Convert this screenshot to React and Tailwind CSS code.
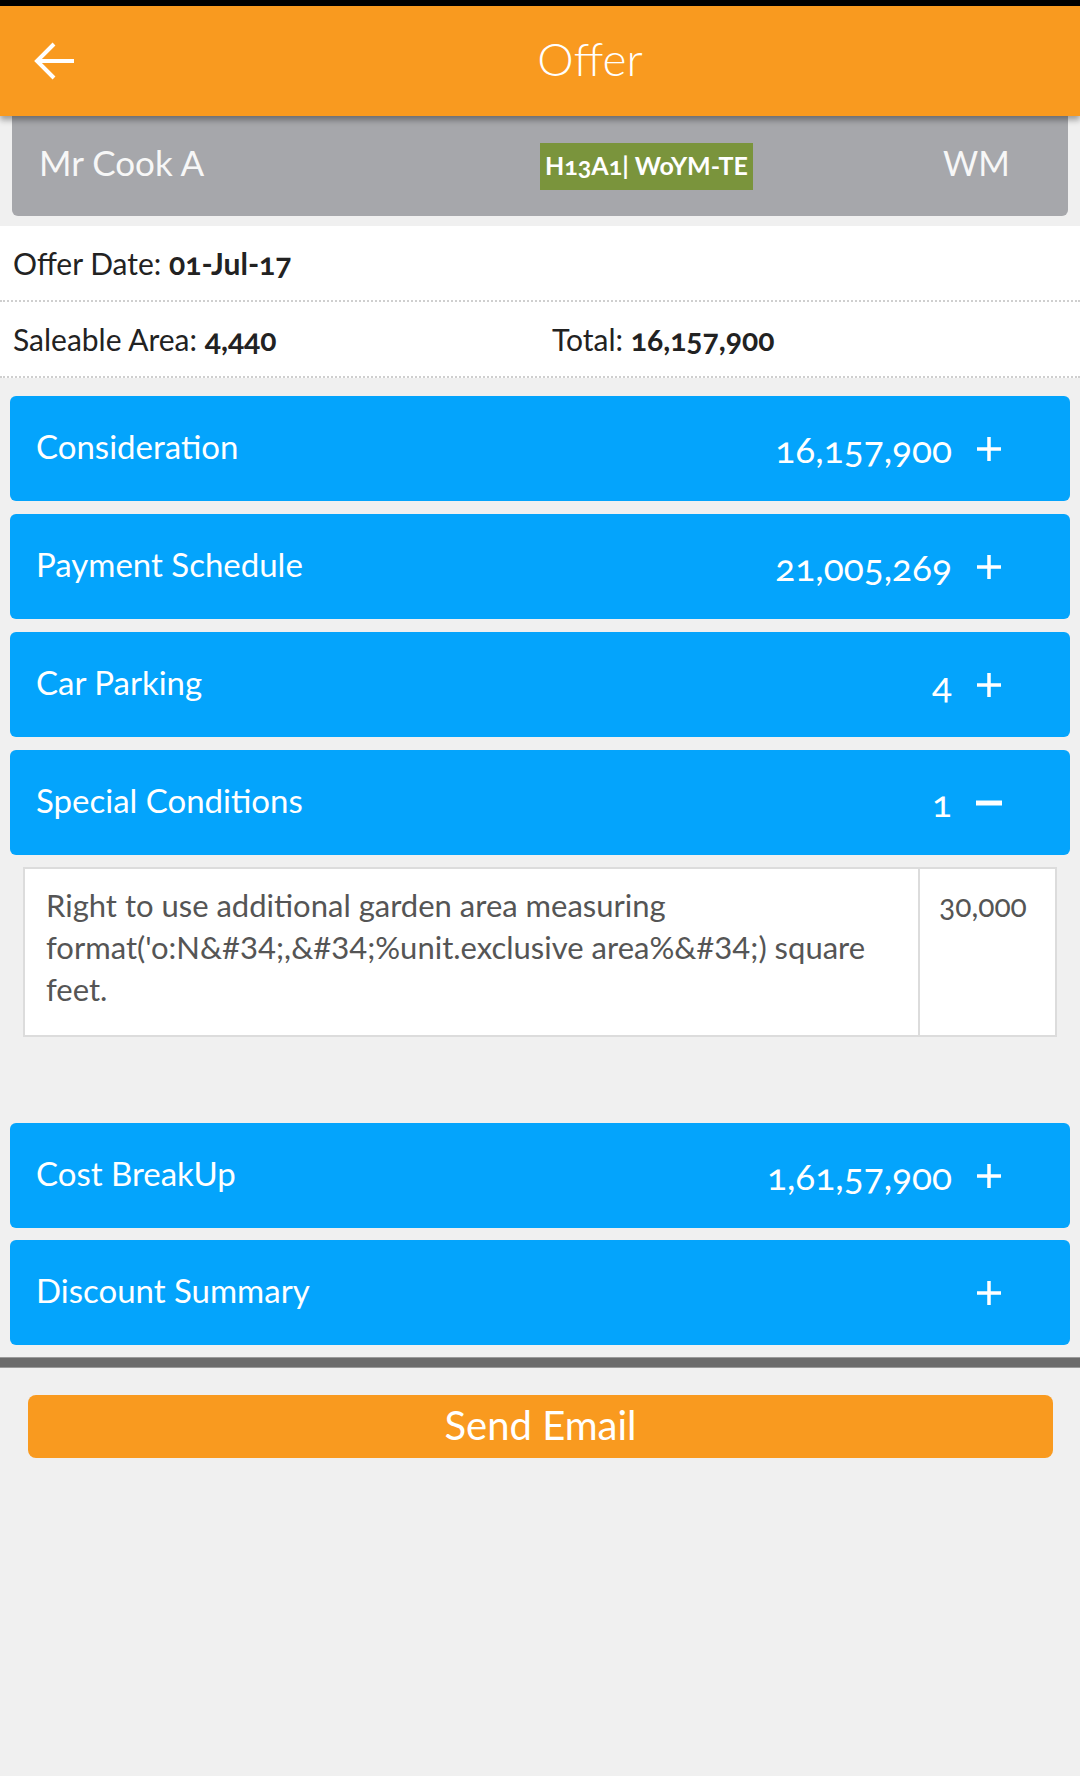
import React from "react";

const sections = [
    { title: "Consideration", value: "16,157,900", open: false },
    { title: "Payment Schedule", value: "21,005,269", open: false },
    { title: "Car Parking", value: "4", open: false },
    { title: "Special Conditions", value: "1", open: true },
];

const sectionsBottom = [
    { title: "Cost BreakUp", value: "1,61,57,900", open: false },
    { title: "Discount Summary", value: "", open: false },
];

const Plus = () => (
    <svg width="26" height="26" viewBox="0 0 26 26">
        <path d="M13 1v24M1 13h24" stroke="#fff" strokeWidth="3.5" />
    </svg>
);

const Minus = () => (
    <svg width="26" height="26" viewBox="0 0 26 26">
        <path d="M0 13h26" stroke="#fff" strokeWidth="5" />
    </svg>
);

const Section = ({ title, value, open }) => (
    <div className="h-[105px] bg-[#04a4fc] rounded-[6px] flex items-center text-white">
        <span className="pl-[26px] text-[33px] flex-1 pb-[3px]">{title}</span>
        <span className="text-[37px] mr-[24px] [font-variant-numeric:oldstyle-nums]">{value}</span>
        <span className="mr-[68px] flex items-center">{open ? <Minus /> : <Plus />}</span>
    </div>
);

const App = () => {
    return (
        <div className="min-h-[1776px] bg-[#f0f0f0] font-['Lato','Open_Sans',sans-serif]">
            <div className="h-[6px] bg-black" />
            <div className="relative z-10 h-[110px] bg-[#f99a1f] flex items-center shadow-[0_4px_6px_rgba(0,0,0,0.35)]">
                <div className="w-[100px] pl-[33px] flex items-center">
                    <svg width="42" height="40" viewBox="0 0 42 40">
                        <path d="M41 20H4M21 3L4 20l17 17" fill="none" stroke="#fff" strokeWidth="4" />
                    </svg>
                </div>
                <div className="flex-1 text-center text-white text-[46px] font-light pb-[6px]">Offer</div>
            </div>
            <div className="mx-[12px] h-[100px] bg-[#a6a7ab] rounded-b-[6px] flex items-center text-[#f7f7f7]">
                <span className="pl-[27px] text-[35px] w-[528px] pb-[8px]">Mr Cook A</span>
                <span className="h-[47px] w-[213px] bg-[#7a943c] text-white text-[25px] font-bold whitespace-nowrap flex items-center justify-center [font-variant-numeric:oldstyle-nums]">
                    H13A1| WoYM-TE
                </span>
                <span className="ml-[190px] text-[34px] pb-[8px]">WM</span>
            </div>
            <div className="mt-[10px] bg-white">
                <div className="h-[76px] flex items-center pl-[13px] text-[30px] text-[#222] border-b-2 border-dotted border-[#cfcfcf]">
                    Offer Date:&nbsp;<b className="[font-variant-numeric:oldstyle-nums]">01-Jul-17</b>
                </div>
                <div className="h-[76px] flex items-center pl-[13px] text-[30px] text-[#222] border-b-2 border-dotted border-[#cfcfcf]">
                    <span className="w-[539px]">
                        Saleable Area: <b className="[font-variant-numeric:oldstyle-nums]">4,440</b>
                    </span>
                    <span>
                        Total: <b className="[font-variant-numeric:oldstyle-nums]">16,157,900</b>
                    </span>
                </div>
            </div>
            <div className="px-[10px] pt-[18px] flex flex-col gap-[13px]">
                {sections.map((s) => (
                    <Section key={s.title} {...s} />
                ))}
            </div>
            <div className="mx-[23px] mt-[12px] h-[170px] bg-white border-2 border-[#dcdcdc] flex text-[#555] text-[31px]">
                <div className="w-[895px] border-r-2 border-[#dcdcdc] pl-[21px] pr-[16px] pt-[15px] leading-[42px]">
                    Right to use additional garden area measuring format('o:N&amp;#34;,&amp;#34;%unit.exclusive area%&amp;#34;) square feet.
                </div>
                <div className="flex-1 pl-[19px] pt-[15px] leading-[42px] text-[30px] [font-variant-numeric:oldstyle-nums]">30,000</div>
            </div>
            <div className="px-[10px] mt-[86px] flex flex-col gap-[12px]">
                {sectionsBottom.map((s) => (
                    <Section key={s.title} {...s} />
                ))}
            </div>
            <div className="mt-[12px] h-[11px] bg-[#6b6b6b] border-y border-[#9a9a9a]" />
            <div className="px-[28px] pr-[27px] mt-[27px]">
                <button className="w-full h-[63px] bg-[#f99a1f] rounded-[8px] text-white text-[40px] flex items-center justify-center pb-[4px]">
                    Send Email
                </button>
            </div>
        </div>
    );
};

export default App;
